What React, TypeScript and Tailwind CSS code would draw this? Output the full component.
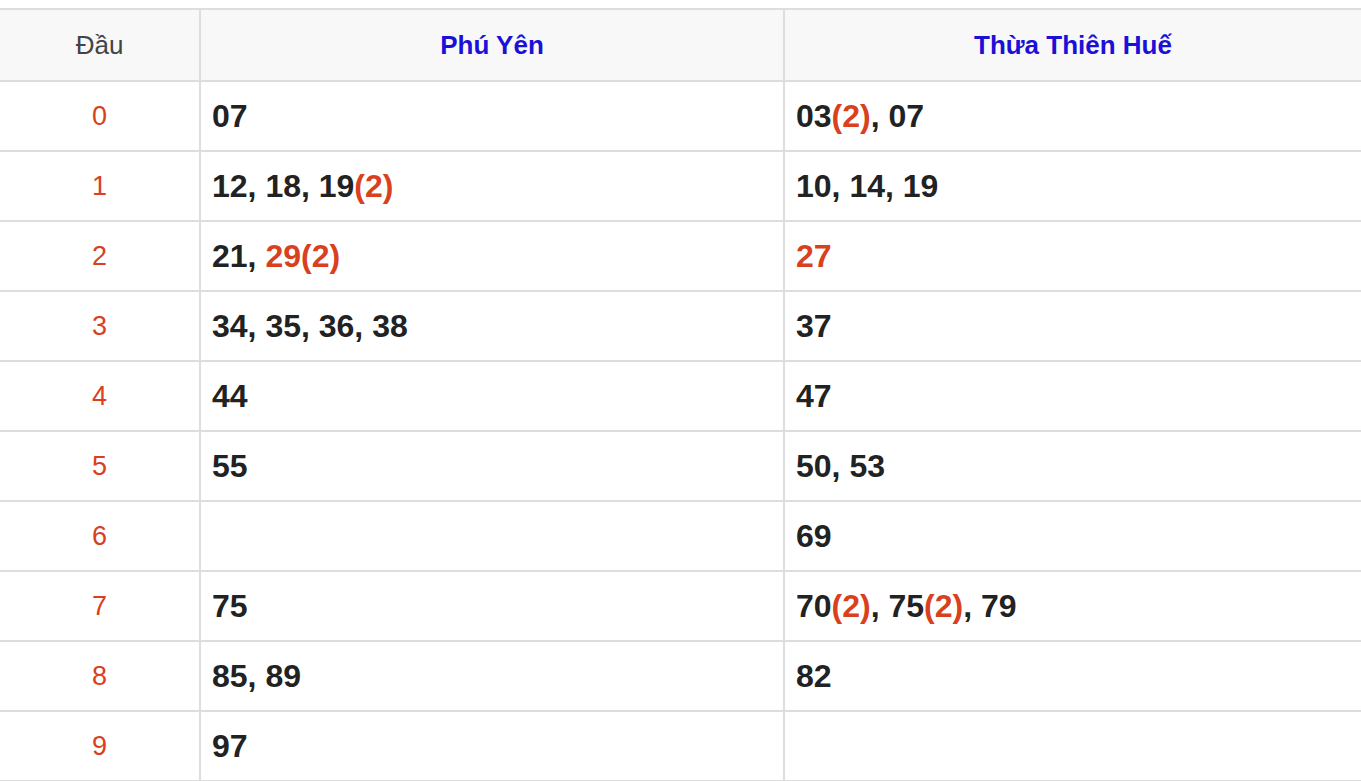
import React from "react"

type Part = { t: string; red?: boolean }

// Each cell is a list of text parts; red marks the highlighted bits
const rows: { dau: string; py: Part[]; tth: Part[] }[] = [
  { dau: "0", py: [{ t: "07" }], tth: [{ t: "03" }, { t: "(2)", red: true }, { t: ", 07" }] },
  { dau: "1", py: [{ t: "12, 18, 19" }, { t: "(2)", red: true }], tth: [{ t: "10, 14, 19" }] },
  { dau: "2", py: [{ t: "21, " }, { t: "29(2)", red: true }], tth: [{ t: "27", red: true }] },
  { dau: "3", py: [{ t: "34, 35, 36, 38" }], tth: [{ t: "37" }] },
  { dau: "4", py: [{ t: "44" }], tth: [{ t: "47" }] },
  { dau: "5", py: [{ t: "55" }], tth: [{ t: "50, 53" }] },
  { dau: "6", py: [], tth: [{ t: "69" }] },
  {
    dau: "7",
    py: [{ t: "75" }],
    tth: [{ t: "70" }, { t: "(2)", red: true }, { t: ", 75" }, { t: "(2)", red: true }, { t: ", 79" }],
  },
  { dau: "8", py: [{ t: "85, 89" }], tth: [{ t: "82" }] },
  { dau: "9", py: [{ t: "97" }], tth: [] },
]

function Cell({ parts, last }: { parts: Part[]; last?: boolean }) {
  return (
    <div
      className={`h-[70px] border-b-2 border-[#dddddd] flex items-center pl-[11px] text-[32px] font-bold text-[#222222] ${
        last ? "" : "border-r-2"
      }`}
    >
      <span>
        {parts.map((p, i) => (
          <span key={i} className={p.red ? "text-[#d8401e]" : ""}>
            {p.t}
          </span>
        ))}
      </span>
    </div>
  )
}

export default function App() {
  return (
    <div className="bg-white pt-2 min-h-screen" style={{ fontFamily: '"Liberation Sans", Arial, sans-serif' }}>
      <div className="border-t-2 border-[#dddddd] grid grid-cols-[201px_584px_1fr]">
        <div className="h-[72px] bg-[#f8f8f8] border-b-2 border-r-2 border-[#dddddd] flex items-center justify-center text-[26px] text-[#444444]">
          Đầu
        </div>
        <div className="h-[72px] bg-[#f8f8f8] border-b-2 border-r-2 border-[#dddddd] flex items-center justify-center text-[26px] font-bold text-[#1c10d8]">
          Phú Yên
        </div>
        <div className="h-[72px] bg-[#f8f8f8] border-b-2 border-[#dddddd] flex items-center justify-center text-[26px] font-bold text-[#1c10d8]">
          Thừa Thiên Huế
        </div>

        {rows.map((r) => (
          <React.Fragment key={r.dau}>
            <div className="h-[70px] border-b-2 border-r-2 border-[#dddddd] flex items-center justify-center text-[27px] text-[#d8401e]">
              {r.dau}
            </div>
            <Cell parts={r.py} />
            <Cell parts={r.tth} last />
          </React.Fragment>
        ))}
      </div>
    </div>
  )
}
